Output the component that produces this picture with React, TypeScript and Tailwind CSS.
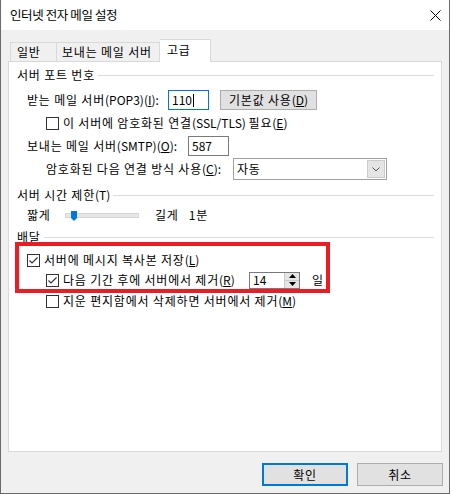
import React from 'react';

const font = "font-['Noto_Sans_CJK_KR','Noto_Sans',sans-serif]";
// hangul runs are set a bit looser than the latin parts
const hg = 'tracking-[0.8px]';

const Checkbox: React.FC<{ checked?: boolean }> = ({ checked }) => (
  <span className="w-[13px] h-[13px] shrink-0 border border-[#333333] bg-white flex items-center justify-center">
    {checked && (
      <svg width="11" height="11" viewBox="0 0 11 11">
        <polyline points="1.5,5.5 4,8 9.5,2.5" fill="none" stroke="#333333" strokeWidth="1.2" />
      </svg>
    )}
  </span>
);

const GroupHeader: React.FC<{ children: React.ReactNode }> = ({ children }) => (
  <div className="flex items-center h-[16px] pl-[8px] pr-[7px]">
    <span className="whitespace-nowrap">{children}</span>
    <div className="flex-1 h-px bg-[#dcdcdc] ml-[3px]" />
  </div>
);

const Button: React.FC<{ children: React.ReactNode; primary?: boolean }> = ({ children, primary }) => (
  <div
    className={
      'w-[86px] h-[23px] flex items-center justify-center bg-[#e1e1e1] ' +
      (primary ? 'border-2 border-[#0078d7]' : 'border border-[#adadad]')
    }
  >
    <span className={hg}>{children}</span>
  </div>
);

export default function App() {
  return (
    <div className={`w-[451px] h-[495px] bg-white text-[12px] leading-[16px] text-black ${font}`}>
      <div className="w-[450px] h-[494px] flex flex-col bg-[#f0f0f0] border-l border-r border-b border-[#6b6b6b]">
        {/* title bar */}
        <div className="h-[30px] bg-white flex items-center justify-between pl-[9px] pr-[8px]">
          <span className="text-[12.5px] tracking-[-0.4px]">인터넷 전자 메일 설정</span>
          <svg width="11" height="11" viewBox="0 0 11 11">
            <path d="M0.5 0.5 L10.5 10.5 M10.5 0.5 L0.5 10.5" stroke="#000" strokeWidth="1" />
          </svg>
        </div>

        {/* tabs */}
        <div className="mt-[9px] h-[22px] flex items-end pl-[9px] relative z-10">
          <div className="w-[47px] h-[19px] border border-b-0 border-[#d9d9d9] pl-[6px] flex items-center">
            <span className={hg}>일반</span>
          </div>
          <div className="w-[103px] h-[19px] border border-b-0 border-l-0 border-[#d9d9d9] pl-[5px] flex items-center">
            <span className={hg}>보내는 메일 서버</span>
          </div>
          <div className="w-[51px] h-[23px] -mb-px bg-white border border-b-0 border-l-0 border-[#d9d9d9] pl-[7px] pb-[3px] flex items-center">
            <span className={hg}>고급</span>
          </div>
        </div>

        {/* panel */}
        <div className="ml-[7px] w-[434px] h-[391px] bg-white border border-[#d9d9d9] relative flex flex-col">
          <div className="mt-[5px]">
            <GroupHeader>
              <span className={hg}>서버 포트 번호</span>
            </GroupHeader>
          </div>

          <div className="mt-[7px] h-[20px] flex items-center pl-[18px]">
            <span className="w-[141px] whitespace-nowrap">
              <span className={hg}>받는 메일 서버</span>(POP3)(<u>I</u>):
            </span>
            <div className="w-[41px] h-[20px] border border-[#0078d7] flex items-center pl-[3px]">
              <span>110</span>
              <span className="w-px h-[13px] bg-black ml-[1px]" />
            </div>
            <div className="ml-[11px] w-[97px] h-[20px] bg-[#e1e1e1] border border-[#adadad] flex items-center justify-center">
              <span className={hg}>기본값 사용</span>(<u>D</u>)
            </div>
          </div>

          <div className="mt-[5px] h-[16px] flex items-center pl-[37px]">
            <Checkbox />
            <span className="ml-[4px] whitespace-nowrap">
              <span className={hg}>이 서버에 암호화된 연결</span>(SSL/TLS) <span className={hg}>필요</span>(<u>E</u>)
            </span>
          </div>

          <div className="mt-[5px] h-[20px] flex items-center pl-[18px]">
            <span className="w-[161px] whitespace-nowrap">
              <span className={hg}>보내는 메일 서버</span>(SMTP)(<u>O</u>):
            </span>
            <div className="w-[41px] h-[20px] border border-[#7a7a7a] flex items-center pl-[3px]">587</div>
          </div>

          <div className="mt-[2px] h-[22px] flex items-center pl-[37px]">
            <span className="w-[187px] whitespace-nowrap">
              <span className={hg}>암호화된 다음 연결 방식 사용</span>(<u>C</u>):
            </span>
            <div className="w-[154px] h-[22px] border border-[#a0a0a0] bg-white flex items-center justify-between pl-[3px] pr-px">
              <span className={hg}>자동</span>
              <div className="w-[18px] h-[18px] bg-[#e5e5e5] border border-[#cccccc] flex items-center justify-center">
                <svg width="8" height="5" viewBox="0 0 8 5">
                  <polyline points="0.5,0.5 4,4 7.5,0.5" fill="none" stroke="#555" strokeWidth="1" />
                </svg>
              </div>
            </div>
          </div>

          <div className="mt-[7px]">
            <GroupHeader>
              <span className={hg}>서버 시간 제한</span>(T)
            </GroupHeader>
          </div>

          <div className="mt-[4px] h-[16px] flex items-center pl-[18px]">
            <span className={`w-[38px] ${hg}`}>짧게</span>
            <div className="relative w-[74px] h-[5px] bg-[#e7e7e7] border border-[#d6d6d6]">
              <svg className="absolute left-[5px] -top-[3px]" width="6" height="10" viewBox="0 0 6 10">
                <path d="M0 0 H6 V7 L3 10 L0 7 Z" fill="#0078d7" />
              </svg>
            </div>
            <span className={`ml-[16px] ${hg}`}>길게</span>
            <span className={`ml-[10px] ${hg}`}>1분</span>
          </div>

          <div className="mt-[6px]">
            <GroupHeader>
              <span className={hg}>배달</span>
            </GroupHeader>
          </div>

          <div className="mt-[7px] h-[16px] flex items-center pl-[18px]">
            <Checkbox checked />
            <span className="ml-[4px] whitespace-nowrap">
              <span className={hg}>서버에 메시지 복사본 저장</span>(<u>L</u>)
            </span>
          </div>

          <div className="mt-[3px] h-[18px] flex items-center pl-[37px]">
            <Checkbox checked />
            <span className="ml-[4px] w-[186px] whitespace-nowrap">
              <span className={hg}>다음 기간 후에 서버에서 제거</span>(<u>R</u>)
            </span>
            <div className="w-[51px] h-[17px] border border-[#7a7a7a] flex items-center justify-between pl-[3px]">
              <span>14</span>
              <div className="w-[15px] h-full flex flex-col border-l border-[#cccccc]">
                <div className="flex-1 bg-[#e5e5e5] border-b border-[#cccccc] flex items-center justify-center">
                  <svg width="7" height="4" viewBox="0 0 7 4">
                    <path d="M0 4 L3.5 0 L7 4 Z" fill="#000" />
                  </svg>
                </div>
                <div className="flex-1 bg-[#e5e5e5] flex items-center justify-center">
                  <svg width="7" height="4" viewBox="0 0 7 4">
                    <path d="M0 0 L3.5 4 L7 0 Z" fill="#000" />
                  </svg>
                </div>
              </div>
            </div>
            <span className={`ml-[12px] ${hg}`}>일</span>
          </div>

          <div className="mt-[4px] h-[16px] flex items-center pl-[37px]">
            <Checkbox />
            <span className="ml-[4px] whitespace-nowrap">
              <span className={hg}>지운 편지함에서 삭제하면 서버에서 제거</span>(<u>M</u>)
            </span>
          </div>

          {/* red annotation box */}
          <div className="absolute left-[6px] top-[180px] w-[315px] h-[51px] border-4 border-[#ed1c24]" />
        </div>

        {/* buttons */}
        <div className="mt-[11px] flex justify-end gap-[9px] pr-[6px]">
          <Button primary>확인</Button>
          <Button>취소</Button>
        </div>
      </div>
    </div>
  );
}
